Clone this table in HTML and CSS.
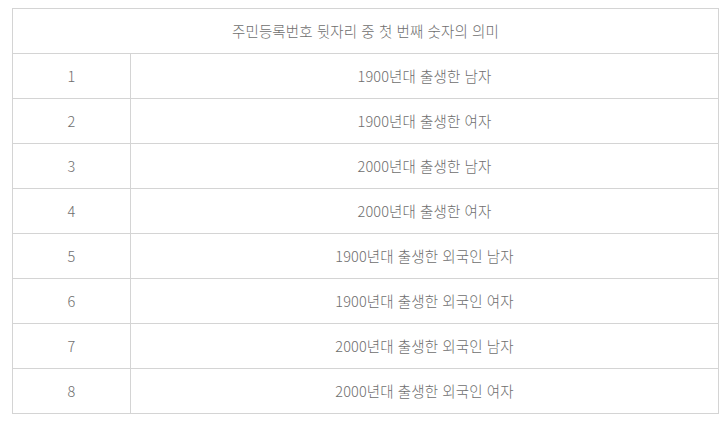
FILE: index.html
```html
<!DOCTYPE html>
<html lang="ko">
<head>
<meta charset="utf-8">
<link rel="stylesheet" href="styles.css">
</head>
<body>
<table class="rrn">
  <thead>
    <tr><th colspan="2">주민등록번호 뒷자리 중 첫 번째 숫자의 의미</th></tr>
  </thead>
  <tbody>
    <tr><td class="num">1</td><td>1900년대 출생한 남자</td></tr>
    <tr><td class="num">2</td><td>1900년대 출생한 여자</td></tr>
    <tr><td class="num">3</td><td>2000년대 출생한 남자</td></tr>
    <tr><td class="num">4</td><td>2000년대 출생한 여자</td></tr>
    <tr><td class="num">5</td><td>1900년대 출생한 외국인 남자</td></tr>
    <tr><td class="num">6</td><td>1900년대 출생한 외국인 여자</td></tr>
    <tr><td class="num">7</td><td>2000년대 출생한 외국인 남자</td></tr>
    <tr><td class="num">8</td><td>2000년대 출생한 외국인 여자</td></tr>
  </tbody>
</table>
</body>
</html>
```
FILE: styles.css
```css
html, body {
  margin: 0;
  background: #ffffff;
}
body {
  padding: 8px 0 0 12px;
  font-family: "Noto Sans CJK KR", "Noto Sans", sans-serif;
  font-weight: 300;
  font-size: 14.5px;
  letter-spacing: 0.1px;
  color: #6e6e6e;
}
.rrn {
  border-collapse: collapse;
  width: 707px;
}
.rrn th, .rrn td {
  border: 1px solid #d4d4d4;
  height: 44px;
  padding: 0;
  text-align: center;
  vertical-align: middle;
  font-weight: 300;
  line-height: 20px;
}
.rrn td.num {
  width: 117px;
}
```
